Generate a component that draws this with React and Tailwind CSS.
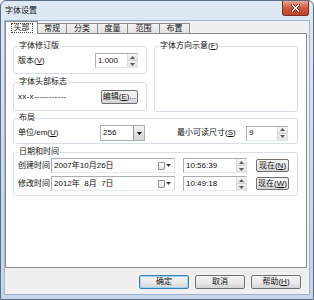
import React from 'react';

function Key({ children }) {
  return <span className="underline underline-offset-1">{children}</span>;
}

function Arrows() {
  return (
    <div className="w-[10px] h-full flex flex-col border-l border-[#dcdcdc]">
      <div className="flex-1 flex items-center justify-center bg-gradient-to-b from-[#f6f6f6] to-[#e4e4e4] border-b border-[#d0d0d0]">
        <svg width="5" height="3" viewBox="0 0 5 3"><path d="M0 3 L2.5 0 L5 3 Z" fill="#5a5a5a" /></svg>
      </div>
      <div className="flex-1 flex items-center justify-center bg-gradient-to-b from-[#f2f2f2] to-[#e0e0e0]">
        <svg width="5" height="3" viewBox="0 0 5 3"><path d="M0 0 L2.5 3 L5 0 Z" fill="#5a5a5a" /></svg>
      </div>
    </div>
  );
}

function Spinner({ value, width }) {
  return (
    <div className={`${width} h-[15px] flex border border-[#abadb3] border-r-[#dbdfe6] border-b-[#e3e9ef] bg-white`}>
      <div className="flex-1 flex items-center pl-[2px]">{value}</div>
      <Arrows />
    </div>
  );
}

function Button({ children, className = '', primary = false }) {
  return (
    <div
      className={`flex items-center justify-center rounded-[2px] border bg-gradient-to-b from-[#f3f3f3] via-[#ebebeb] to-[#d3d3d3] ${
        primary ? 'border-[#3c7fb1] shadow-[inset_0_0_0_1px_#9fd5f5]' : 'border-[#707070]'
      } ${className}`}
    >
      {children}
    </div>
  );
}

function Group({ title, className = '', children }) {
  return (
    <fieldset className={`border border-[#d5dfe5] rounded-[3px] pl-[4px] pr-[4px] ${className}`}>
      <legend className="px-[1px] leading-[10px]">{title}</legend>
      {children}
    </fieldset>
  );
}

function DateBox({ text }) {
  return (
    <div className="w-[124px] h-[15px] flex items-center border border-[#abadb3] border-r-[#dbdfe6] border-b-[#e3e9ef] bg-white pl-[2px] pr-[3px]">
      <span className="flex-1 whitespace-pre">{text}</span>
      <div className="w-[7px] h-[8px] border border-[#8e8f8f] rounded-br-[2px] bg-gradient-to-b from-white to-[#e6e6e6]" />
      <svg className="ml-[1px]" width="5" height="3" viewBox="0 0 5 3"><path d="M0 0 L2.5 3 L5 0 Z" fill="#3c3c3c" /></svg>
    </div>
  );
}

function Tab({ label, width }) {
  return (
    <div className={`${width} h-[11px] flex items-center justify-center border border-b-0 border-[#898c95] -ml-[1px] bg-gradient-to-b from-[#f2f2f2] to-[#e1e1e1]`}>
      {label}
    </div>
  );
}

export default function App() {
  return (
    <div className="w-[314px] h-[300px] flex flex-col border border-[#5b6e84] rounded-t-[6px] bg-gradient-to-b from-[#dfe9f5] via-[#cddcef] to-[#c3d5ec] text-[8px] leading-[10px] text-[#111] [font-family:'Liberation_Sans','Noto_Sans_CJK_SC',sans-serif] overflow-hidden">
      {/* title bar */}
      <div className="h-[19px] flex items-start shrink-0">
        <div className="flex-1 pl-[4px] pt-[5px] text-[8px]">字体设置</div>
        <div className="w-[27px] h-[15px] mr-[4px] rounded-b-[3px] border border-t-0 border-[#7b2f20] bg-gradient-to-b from-[#e9a796] via-[#d0573d] to-[#c3452b] flex items-center justify-center">
          <svg width="9" height="8" viewBox="0 0 9 8">
            <path d="M1.5 1 L7.5 7 M7.5 1 L1.5 7" stroke="#4a1b12" strokeWidth="2.6" strokeLinecap="square" />
            <path d="M1.5 1 L7.5 7 M7.5 1 L1.5 7" stroke="#ffffff" strokeWidth="1.4" strokeLinecap="square" />
          </svg>
        </div>
      </div>

      {/* client */}
      <div className="flex-1 mx-[3px] mb-[4px] flex flex-col border border-[#9fb4cf] bg-[#f0f0f0] pr-[2px]">
        {/* tabs */}
        <div className="h-[13px] flex items-end shrink-0">
          <div className="relative z-10 w-[33px] h-[13px] flex items-start justify-center border border-b-0 border-[#898c95] bg-white pt-[1px]">
            <span className="px-[3px] leading-[10px] outline outline-1 outline-dotted outline-[#444] -outline-offset-1">头部</span>
          </div>
          <Tab label="常规" width="w-[30px]" />
          <Tab label="分类" width="w-[32px]" />
          <Tab label="度量" width="w-[31px]" />
          <Tab label="范围" width="w-[33px]" />
          <Tab label="布置" width="w-[31px]" />
        </div>

        {/* panel */}
        <div className="-mt-[1px] h-[235px] shrink-0 border border-[#898c95] bg-white pl-[7px] pr-[8px] pt-[7px] flex flex-col">
          <div className="flex items-start gap-[7px]">
            <div className="w-[134px] flex flex-col">
              <Group title="字体修订版" className="h-[33px]">
                <div className="mt-[2px] flex items-center">
                  <span className="w-[77px]">
                    版本(<Key>V</Key>)
                  </span>
                  <Spinner value="1.000" width="w-[43px]" />
                </div>
              </Group>
              <Group title="字体头部标志" className="h-[34px] mt-[3px]">
                <div className="mt-[3px] flex items-center">
                  <span className="w-[83px] tracking-[0.3px]">xx-x-----------</span>
                  <Button className="w-[37px] h-[14px]">
                    编辑(<Key>E</Key>)...
                  </Button>
                </div>
              </Group>
            </div>
            <Group
              title={
                <span>
                  字体方向示意(<Key>F</Key>)
                </span>
              }
              className="flex-1 h-[71px]"
            />
          </div>

          <Group title="布局" className="h-[31px] mt-[1px]">
            <div className="mt-[2px] h-[16px] flex items-center">
              <span className="w-[82px]">
                单位/em(<Key>U</Key>)
              </span>
              <div className="w-[45px] h-[16px] flex border border-[#abadb3] bg-white">
                <div className="flex-1 flex items-center pl-[2px]">256</div>
                <div className="w-[11px] flex items-center justify-center border-l border-[#9a9a9a] bg-gradient-to-b from-[#f2f2f2] to-[#d4d4d4]">
                  <svg width="5" height="3" viewBox="0 0 5 3"><path d="M0 0 L2.5 3 L5 0 Z" fill="#000" /></svg>
                </div>
              </div>
              <span className="ml-[32px] w-[69px]">
                最小可读尺寸(<Key>S</Key>)
              </span>
              <Spinner value="9" width="w-[42px]" />
            </div>
          </Group>

          <Group title="日期和时间" className="h-[49px] mt-[3px]">
            <div className="mt-[1px] flex flex-col gap-[3px]">
              <div className="h-[15px] flex items-center">
                <span className="w-[33px]">创建时间</span>
                <DateBox text="2007年10月26日" />
                <div className="ml-[8px]">
                  <Spinner value="10:56:39" width="w-[64px]" />
                </div>
                <Button className="ml-[9px] w-[33px] h-[13px]">
                  现在(<Key>N</Key>)
                </Button>
              </div>
              <div className="h-[15px] flex items-center">
                <span className="w-[33px]">修改时间</span>
                <DateBox text="2012年  8月  7日" />
                <div className="ml-[8px]">
                  <Spinner value="10:49:18" width="w-[64px]" />
                </div>
                <Button className="ml-[9px] w-[33px] h-[13px]">
                  现在(<Key>W</Key>)
                </Button>
              </div>
            </div>
          </Group>
        </div>

        {/* dialog buttons */}
        <div className="mt-[7px] flex justify-end gap-[6px] pr-[6px]">
          <Button primary className="w-[50px] h-[14px]">确定</Button>
          <Button className="w-[50px] h-[14px]">取消</Button>
          <Button className="w-[50px] h-[14px]">
            帮助(<Key>H</Key>)
          </Button>
        </div>
      </div>
    </div>
  );
}
